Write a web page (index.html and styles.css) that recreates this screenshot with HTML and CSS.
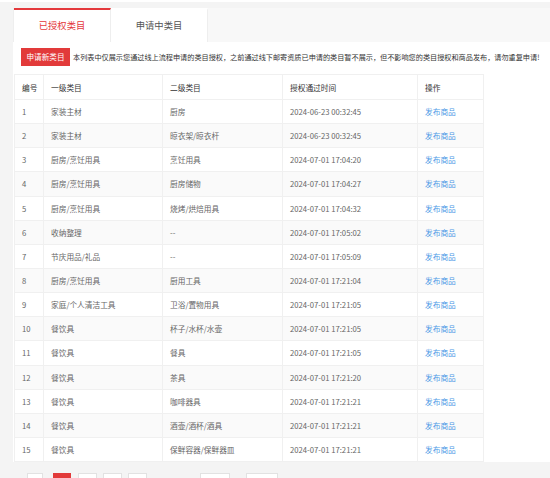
FILE: index.html
```html
<!DOCTYPE html>
<html lang="zh-CN">
<head>
    <meta charset="UTF-8">
    <meta name="viewport" content="width=device-width, initial-scale=1.0">
    <title>类目授权</title>
    <link rel="stylesheet" href="styles.css">
</head>
<body>
    <div class="topbar"></div>
    <div class="main">
        <!-- 标签页 -->
        <ul class="tabs">
            <li class="tab active">已授权类目</li>
            <li class="tab">申请中类目</li>
        </ul>
        <div class="panel">
            <div class="notice">
                <a class="btn-apply" href="javascript:;">申请新类目</a>
                <span class="tip">本列表中仅展示您通过线上流程申请的类目授权，之前通过线下邮寄资质已申请的类目暂不展示，但不影响您的类目授权和商品发布，请勿重复申请!</span>
            </div>
            <table class="list">
                <colgroup>
                    <col style="width: 29px">
                    <col style="width: 119px">
                    <col style="width: 120px">
                    <col style="width: 135px">
                    <col style="width: 66px">
                </colgroup>
                <thead>
                    <tr><th>编号</th><th>一级类目</th><th>二级类目</th><th>授权通过时间</th><th>操作</th></tr>
                </thead>
                <tbody>
                    <tr><td>1</td><td>家装主材</td><td>厨房</td><td>2024-06-23 00:32:45</td><td><a href="javascript:;">发布商品</a></td></tr>
                    <tr><td>2</td><td>家装主材</td><td>晾衣架/晾衣杆</td><td>2024-06-23 00:32:45</td><td><a href="javascript:;">发布商品</a></td></tr>
                    <tr><td>3</td><td>厨房/烹饪用具</td><td>烹饪用具</td><td>2024-07-01 17:04:20</td><td><a href="javascript:;">发布商品</a></td></tr>
                    <tr><td>4</td><td>厨房/烹饪用具</td><td>厨房储物</td><td>2024-07-01 17:04:27</td><td><a href="javascript:;">发布商品</a></td></tr>
                    <tr><td>5</td><td>厨房/烹饪用具</td><td>烧烤/烘焙用具</td><td>2024-07-01 17:04:32</td><td><a href="javascript:;">发布商品</a></td></tr>
                    <tr><td>6</td><td>收纳整理</td><td>--</td><td>2024-07-01 17:05:02</td><td><a href="javascript:;">发布商品</a></td></tr>
                    <tr><td>7</td><td>节庆用品/礼品</td><td>--</td><td>2024-07-01 17:05:09</td><td><a href="javascript:;">发布商品</a></td></tr>
                    <tr><td>8</td><td>厨房/烹饪用具</td><td>厨用工具</td><td>2024-07-01 17:21:04</td><td><a href="javascript:;">发布商品</a></td></tr>
                    <tr><td>9</td><td>家庭/个人清洁工具</td><td>卫浴/置物用具</td><td>2024-07-01 17:21:05</td><td><a href="javascript:;">发布商品</a></td></tr>
                    <tr><td>10</td><td>餐饮具</td><td>杯子/水杯/水壶</td><td>2024-07-01 17:21:05</td><td><a href="javascript:;">发布商品</a></td></tr>
                    <tr><td>11</td><td>餐饮具</td><td>餐具</td><td>2024-07-01 17:21:05</td><td><a href="javascript:;">发布商品</a></td></tr>
                    <tr><td>12</td><td>餐饮具</td><td>茶具</td><td>2024-07-01 17:21:20</td><td><a href="javascript:;">发布商品</a></td></tr>
                    <tr><td>13</td><td>餐饮具</td><td>咖啡器具</td><td>2024-07-01 17:21:21</td><td><a href="javascript:;">发布商品</a></td></tr>
                    <tr><td>14</td><td>餐饮具</td><td>酒壶/酒杯/酒具</td><td>2024-07-01 17:21:21</td><td><a href="javascript:;">发布商品</a></td></tr>
                    <tr><td>15</td><td>餐饮具</td><td>保鲜容器/保鲜器皿</td><td>2024-07-01 17:21:21</td><td><a href="javascript:;">发布商品</a></td></tr>
                </tbody>
            </table>
        </div>
        <!-- 分页 -->
        <div class="pager">
            <a class="pg prev" href="javascript:;">‹</a>
            <a class="pg cur" href="javascript:;">1</a>
            <a class="pg" href="javascript:;">2</a>
            <a class="pg" href="javascript:;">3</a>
            <a class="pg" href="javascript:;">›</a>
            <span class="pg-text">共3页</span>
            <span class="pg-text">去第</span>
            <input class="pg-input" type="text">
            <span class="pg-text">页</span>
            <a class="pg-btn" href="javascript:;">确定</a>
        </div>
    </div>
</body>
</html>
```

FILE: styles.css
```css
* {
    margin: 0;
    padding: 0;
    list-style: none;
    box-sizing: border-box;
}
body {
    background-color: #f4f4f4;
    font-family: "Noto Sans CJK SC", "Liberation Sans", sans-serif;
    color: #666;
    height: 478px;
    overflow: hidden;
}
a {
    text-decoration: none;
}
.topbar {
    height: 2px;
    background-color: #fff;
}
.main {
    margin: 6px 0 0 13px;
}
.tabs {
    display: flex;
    height: 34px;
    background-color: #f8f8f8;
    border-left: 1px solid #eee;
}
.tabs .tab {
    width: 97px;
    text-align: center;
    font-size: 9.3px;
    line-height: 31px;
    color: #555;
    background-color: #fff;
    border-top: 2px solid #fff;
    border-right: 1px solid #eee;
}
.tabs .tab.active {
    color: #e4393c;
    border-top-color: #e4393c;
}
.panel {
    background-color: #fff;
    padding: 0 0 0 1px;
}
.notice {
    display: flex;
    align-items: center;
    height: 32px;
    padding: 0 0 2px 7px;
}
.btn-apply {
    display: block;
    width: 49px;
    height: 18px;
    line-height: 18px;
    text-align: center;
    font-size: 7.6px;
    color: #fff;
    background-color: #e23a3a;
}
.tip {
    margin-left: 3px;
    font-size: 7.15px;
    color: #333;
    white-space: nowrap;
}
.list {
    width: 470px;
    border-collapse: collapse;
    table-layout: fixed;
    font-size: 7.7px;
    border-left: 1px solid #eee;
}
.list th,
.list td {
    height: 24.15px;
    padding: 0 7px;
    text-align: left;
    font-weight: normal;
    border: 1px solid #f0f0f0;
    white-space: nowrap;
}
.list th {
    height: 25px;
    color: #333;
}
.list tbody tr:nth-child(even) {
    background-color: #fafafa;
}
.list td a {
    color: #4a98e6;
}
.pager {
    display: flex;
    align-items: center;
    margin: 11px 0 0 14px;
    font-size: 7.6px;
    color: #333;
}
.pg {
    display: block;
    width: 19px;
    height: 20px;
    line-height: 18px;
    margin-right: 6px;
    text-align: center;
    color: #333;
    background-color: #fff;
    border: 1px solid #e2e2e2;
}
.pg.prev {
    width: 16px;
    margin-right: 10px;
    color: #bbb;
}
.pg.cur {
    width: 18px;
    margin-right: 7px;
    color: #fff;
    background-color: #e23a3a;
    border-color: #e23a3a;
}
.pg-text {
    margin-right: 6px;
}
.pg-input {
    width: 30px;
    height: 20px;
    margin-right: 3px;
    border: 1px solid #e2e2e2;
}
.pg-btn {
    display: block;
    width: 32px;
    height: 20px;
    line-height: 18px;
    text-align: center;
    color: #333;
    background-color: #fff;
    border: 1px solid #e2e2e2;
}
```
